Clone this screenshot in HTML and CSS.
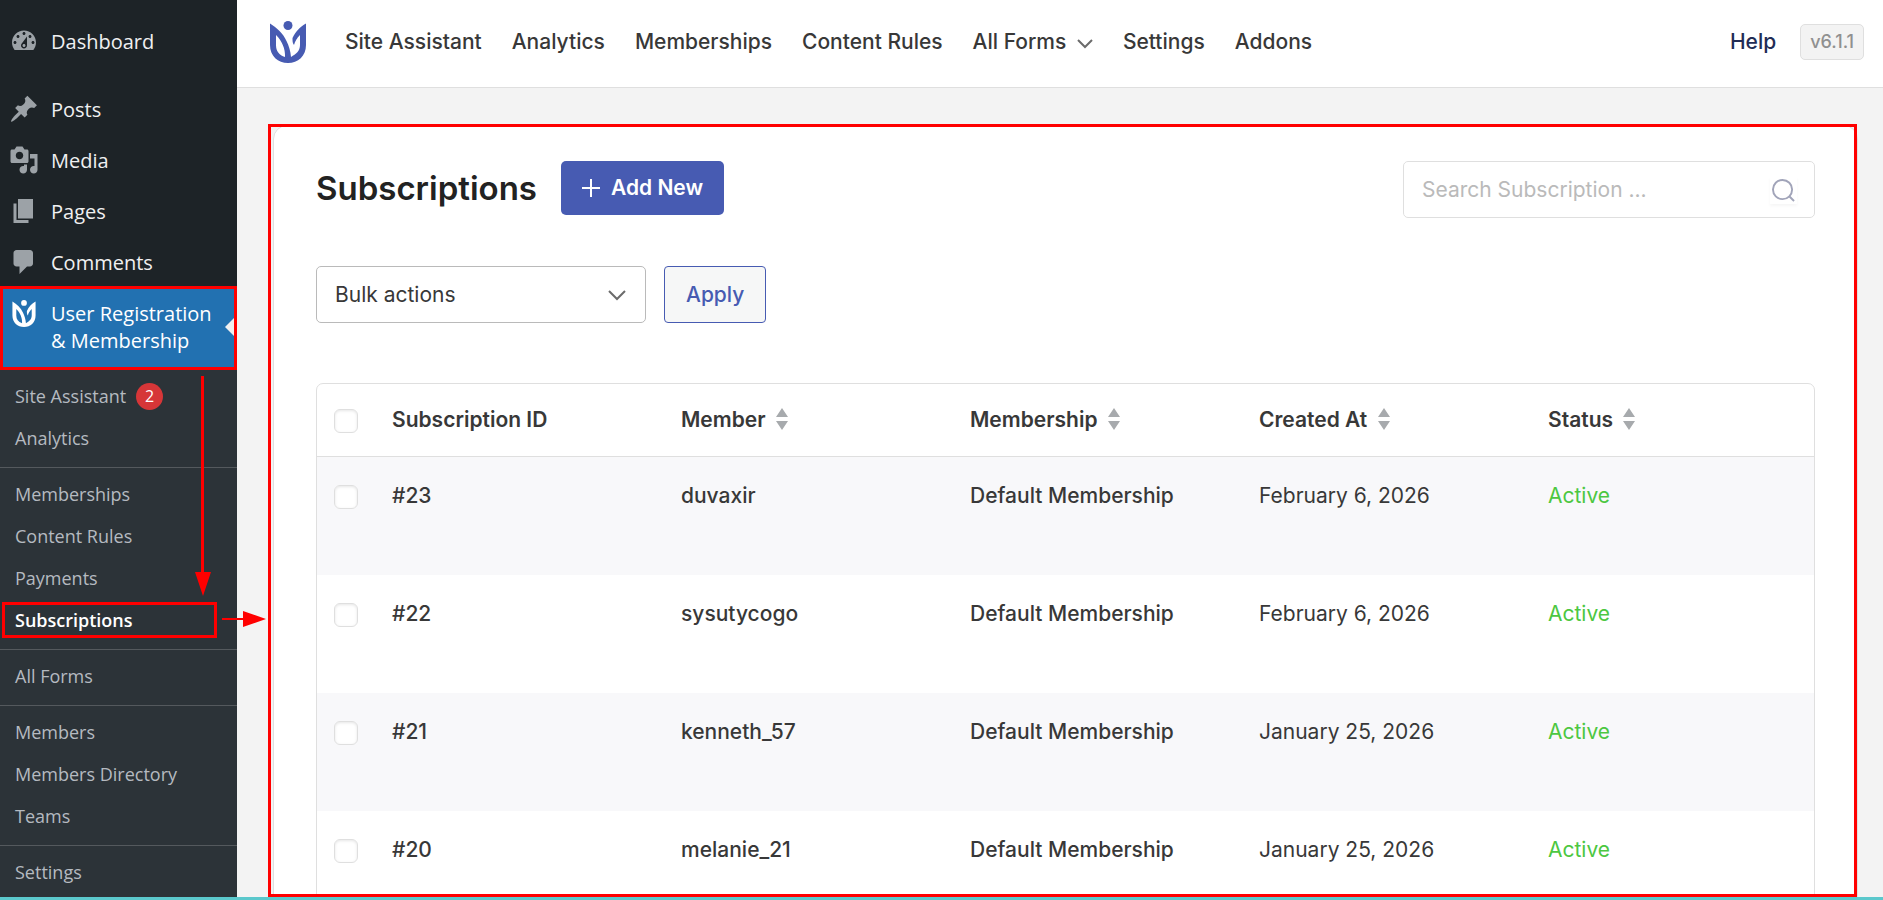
FILE: index.html
```
<!DOCTYPE html>
<html lang="en">
<head>
    <meta charset="UTF-8">
    <meta name="viewport" content="width=device-width, initial-scale=1.0">
    <title>Subscriptions - User Registration &amp; Membership</title>
    <link rel="stylesheet" href="styles.css">
</head>
<body>
    <svg width="0" height="0" class="sprite" aria-hidden="true">
        <symbol id="logo" viewBox="0 0 36 42">
            <circle cx="18" cy="4.5" r="4.5"/>
            <path fill-rule="evenodd" d="M0 2.5C7 7 13 12 16.500 20C19 25 20.500 30 21 36C26 33 30 30 30 24V14C27 17 25 20 24 24C22.500 22 22.500 20 22.500 17C26 10 30 6 36 2.500V24C36 35 28 42 18 42C8 42 0 35 0 24ZM6 14V24C6 30 9 34 15 36C15.500 28 12 20 6 14Z"/>
        </symbol>
        <symbol id="sort" viewBox="0 0 12 22">
            <path d="M6 0L12 9H0ZM6 22L0 13H12Z"/>
        </symbol>
    </svg>

    <div class="app">
        <!-- Admin sidebar -->
        <aside class="sidebar">
            <nav>
                <ul class="menu">
                    <li class="menu-gap"><a href="#">
                        <svg class="menu-icon" viewBox="0 0 20 20"><path fill-rule="evenodd" d="M3.760 16h12.480c1.100-1.370 1.760-3.110 1.760-5c0-4.420-3.580-8-8-8s-8 3.580-8 8c0 1.890.66 3.630 1.760 5zM10 4c.55 0 1 .45 1 1s-.45 1-1 1s-1-.45-1-1s.45-1 1-1zM6 6c.55 0 1 .45 1 1s-.45 1-1 1s-1-.45-1-1s.45-1 1-1zm8 0c.55 0 1 .45 1 1s-.45 1-1 1s-1-.45-1-1s.45-1 1-1zm-5.370 5.550L12 7v6c0 1.100-.9 2-2 2s-2-.9-2-2c0-.57.240-1.080.63-1.450zM4 10c.55 0 1 .45 1 1s-.45 1-1 1s-1-.45-1-1s.45-1 1-1zm12 0c.55 0 1 .45 1 1s-.45 1-1 1s-1-.45-1-1s.45-1 1-1zm-5 3c0-.55-.45-1-1-1s-1 .45-1 1s.45 1 1 1s1-.45 1-1z"/></svg>
                        Dashboard</a></li>
                    <li><a href="#">
                        <svg class="menu-icon" viewBox="0 0 20 20"><path d="M10.440 3.020l1.820-1.820l6.360 6.350l-1.830 1.820c-1.050-.68-2.480-.57-3.410.360l-.75.750c-.92.930-1.040 2.350-.350 3.410l-1.830 1.820l-2.410-2.410l-2.800 2.790c-.42.420-3.380 2.710-3.800 2.290s1.860-3.390 2.280-3.810l2.790-2.790L4.100 9.360l1.830-1.820c1.050.69 2.480.57 3.400-.360l.75-.750c.93-.92 1.050-2.350.360-3.410z"/></svg>
                        Posts</a></li>
                    <li><a href="#">
                        <svg class="menu-icon" viewBox="0 0 20 20"><path fill-rule="evenodd" d="M13 11V4c0-.55-.45-1-1-1h-1.670L9 1H5L3.670 3H2c-.55 0-1 .45-1 1v7c0 .55.450 1 1 1h10c.55 0 1-.45 1-1zM7 4.500c1.380 0 2.500 1.120 2.500 2.500S8.380 9.500 7 9.500S4.500 8.380 4.500 7S5.620 4.500 7 4.500zM14 6h5v10.500c0 1.380-1.120 2.500-2.500 2.500S14 17.880 14 16.500s1.120-2.500 2.500-2.500c.17 0 .34.020.5.050V9h-3V6zm-4 8.050V13h2v3.500c0 1.380-1.120 2.500-2.500 2.500S7 17.880 7 16.500S8.120 14 9.500 14c.17 0 .34.020.5.050z"/></svg>
                        Media</a></li>
                    <li><a href="#">
                        <svg class="menu-icon" viewBox="0 0 20 20"><path d="M6 15V2h10v13H6zm-1 1h8v2H3V5h2v11z"/></svg>
                        Pages</a></li>
                    <li><a href="#">
                        <svg class="menu-icon" viewBox="0 0 20 20"><path d="M5 2h9c1.100 0 2 .9 2 2v7c0 1.100-.9 2-2 2h-2l-5 5v-5H5c-1.100 0-2-.9-2-2V4c0-1.100.9-2 2-2z"/></svg>
                        Comments</a></li>
                    <li class="current"><a href="#">
                        <svg class="menu-icon brand-icon"><use href="#logo"/></svg>
                        User Registration &amp; Membership</a></li>
                </ul>
                <ul class="submenu">
                    <li><a href="#">Site Assistant <span class="count">2</span></a></li>
                    <li><a href="#">Analytics</a></li>
                    <li class="divided"><a href="#">Memberships</a></li>
                    <li><a href="#">Content Rules</a></li>
                    <li><a href="#">Payments</a></li>
                    <li class="selected"><a href="#">Subscriptions</a></li>
                    <li class="divided"><a href="#">All Forms</a></li>
                    <li class="divided"><a href="#">Members</a></li>
                    <li><a href="#">Members Directory</a></li>
                    <li><a href="#">Teams</a></li>
                    <li class="divided"><a href="#">Settings</a></li>
                </ul>
            </nav>
            <!-- Guide arrows -->
            <svg class="arrow-down" viewBox="0 0 16 220" aria-hidden="true"><path d="M6 0H9V196H16L8 220L0 196H6Z"/></svg>
            <svg class="arrow-right" viewBox="0 0 44 16" aria-hidden="true"><path d="M0 7H21V0L44 8L21 16V9H0Z"/></svg>
        </aside>

        <main class="main">
            <header class="topbar">
                <svg class="logo"><use href="#logo"/></svg>
                <nav class="topnav">
                    <a href="#">Site Assistant</a>
                    <a href="#">Analytics</a>
                    <a href="#">Memberships</a>
                    <a href="#">Content Rules</a>
                    <a href="#">All Forms
                        <svg class="nav-chevron" viewBox="0 0 16 10"><path d="M1 1L8 8L15 1"/></svg></a>
                    <a href="#">Settings</a>
                    <a href="#">Addons</a>
                </nav>
                <a href="#" class="help">Help</a>
                <span class="version">v6.1.1</span>
            </header>

            <div class="content">
                <section class="card">
                    <div class="card-head">
                        <h1>Subscriptions</h1>
                        <button type="button" class="add-button">
                            <svg viewBox="0 0 18 18"><path d="M9 0V18M0 9H18"/></svg>
                            Add New
                        </button>
                        <form class="search">
                            <input type="text" aria-label="Search Subscription" placeholder="Search Subscription ...">
                            <button type="submit" aria-label="Search">
                                <svg viewBox="0 0 24 24"><circle cx="11" cy="11" r="10"/><path d="M18 18L23 23"/></svg>
                            </button>
                        </form>
                    </div>

                    <div class="bulk">
                        <div class="select-wrap">
                            <select aria-label="Bulk actions">
                                <option>Bulk actions</option>
                                <option>Delete</option>
                            </select>
                            <svg viewBox="0 0 18 11"><path d="M1 1L9 9L17 1"/></svg>
                        </div>
                        <button type="button" class="apply-button">Apply</button>
                    </div>

                    <div class="table-wrap">
                        <table>
                            <thead>
                                <tr>
                                    <th class="check"><input type="checkbox" aria-label="Select all"></th>
                                    <th>Subscription ID</th>
                                    <th>Member <svg class="sort"><use href="#sort"/></svg></th>
                                    <th>Membership <svg class="sort"><use href="#sort"/></svg></th>
                                    <th>Created At <svg class="sort"><use href="#sort"/></svg></th>
                                    <th>Status <svg class="sort"><use href="#sort"/></svg></th>
                                </tr>
                            </thead>
                            <tbody>
                                <tr>
                                    <td class="check"><input type="checkbox" aria-label="Select #23"></td>
                                    <td class="strong">#23</td>
                                    <td class="strong">duvaxir</td>
                                    <td class="strong">Default Membership</td>
                                    <td>February 6, 2026</td>
                                    <td class="active">Active</td>
                                </tr>
                                <tr>
                                    <td class="check"><input type="checkbox" aria-label="Select #22"></td>
                                    <td class="strong">#22</td>
                                    <td class="strong">sysutycogo</td>
                                    <td class="strong">Default Membership</td>
                                    <td>February 6, 2026</td>
                                    <td class="active">Active</td>
                                </tr>
                                <tr>
                                    <td class="check"><input type="checkbox" aria-label="Select #21"></td>
                                    <td class="strong">#21</td>
                                    <td class="strong">kenneth_57</td>
                                    <td class="strong">Default Membership</td>
                                    <td>January 25, 2026</td>
                                    <td class="active">Active</td>
                                </tr>
                                <tr>
                                    <td class="check"><input type="checkbox" aria-label="Select #20"></td>
                                    <td class="strong">#20</td>
                                    <td class="strong">melanie_21</td>
                                    <td class="strong">Default Membership</td>
                                    <td>January 25, 2026</td>
                                    <td class="active">Active</td>
                                </tr>
                            </tbody>
                        </table>
                    </div>
                </section>
                <div class="highlight"></div>
            </div>
        </main>
    </div>
</body>
</html>
```
FILE: styles.css
```
* {
    box-sizing: border-box;
}

body {
    margin: 0;
    height: 100vh;
    overflow: hidden;
    border-bottom: 3px solid #5bc8cc;
    background: #f3f3f3;
    color: #383838;
    font-family: Inter, "Liberation Sans", sans-serif;
    font-size: 21px;
    line-height: 28px;
}

a {
    color: inherit;
    text-decoration: none;
}

ul {
    list-style: none;
    margin: 0;
    padding: 0;
}

button,
input,
select {
    font: inherit;
}

.sprite {
    position: absolute;
}

.app {
    display: flex;
    height: 100%;
}

/* Sidebar */
.sidebar {
    position: relative;
    flex: 0 0 237px;
    padding-top: 16px;
    background: #1d2327;
    color: #f0f0f1;
    font-family: "Open Sans", "Noto Sans", sans-serif;
    font-size: 20px;
    line-height: 27px;
    z-index: 1;
}

.menu a {
    display: flex;
    padding: 12px 20px 12px 9px;
}

.menu-gap {
    margin-bottom: 17px;
}

.menu-icon {
    flex: none;
    width: 30px;
    height: 30px;
    margin: -2px 12px 0 0;
    fill: #9ca2a7;
}

.menu li:not(.current) a {
    height: 51px;
}

.current {
    position: relative;
    background: #2271b1;
    color: #fff;
}

.current a {
    padding-bottom: 13px;
}

.current .brand-icon {
    height: 27px;
    margin-top: 0;
    fill: #fff;
}

.current::before {
    content: "";
    position: absolute;
    right: 0;
    top: 50%;
    margin-top: -13px;
    border: 12px solid transparent;
    border-right-color: #f0f0f1;
    border-left: 0;
}

.current::after {
    content: "";
    position: absolute;
    inset: -2px 0 -3px;
    border: 3px solid #f00;
}

.submenu {
    height: 100%;
    padding-top: 8px;
    background: #2c3338;
    color: #b5bac0;
    font-size: 18px;
    line-height: 42px;
}

.sidebar nav {
    height: 100%;
    overflow: hidden;
}

.submenu a {
    display: flex;
    align-items: center;
    gap: 10px;
    height: 42px;
    padding: 0 15px;
}

.divided {
    margin-top: 8px;
    padding-top: 5px;
    border-top: 1px solid #54595d;
}

.count {
    width: 27px;
    height: 27px;
    border-radius: 50%;
    background: #d63638;
    color: #fff;
    font-size: 16px;
    line-height: 27px;
    text-align: center;
}

.selected {
    position: relative;
    color: #fff;
    font-weight: 600;
}

.selected::after {
    content: "";
    position: absolute;
    inset: 3px 20px 3px 2px;
    border: 3px solid #f00;
}

.arrow-down {
    position: absolute;
    left: 195px;
    top: 376px;
    width: 16px;
    height: 220px;
    fill: #f00;
}

.arrow-right {
    position: absolute;
    left: 222px;
    top: 611px;
    width: 44px;
    height: 16px;
    fill: #f00;
}

/* Top bar */
.main {
    flex: 1;
    min-width: 0;
    display: flex;
    flex-direction: column;
}

.topbar {
    display: flex;
    align-items: center;
    flex: none;
    height: 88px;
    padding: 0 19px 4px 33px;
    border-bottom: 1px solid #dfdfdf;
    background: #fff;
}

.logo {
    width: 36px;
    height: 42px;
    margin-right: 39px;
    fill: #475bb2;
}

.topnav {
    display: flex;
    gap: 30px;
    font-weight: 500;
}

.nav-chevron {
    width: 16px;
    height: 10px;
    margin-left: 5px;
    fill: none;
    stroke: #6b6b6b;
    stroke-width: 2;
}

.help {
    margin-left: auto;
    color: #222c55;
    font-weight: 500;
}

.version {
    margin-left: 24px;
    padding: 3px 9px;
    border: 1px solid #dfdfdf;
    border-radius: 5px;
    background: #f3f3f3;
    color: #909090;
    font-size: 18px;
    font-weight: 500;
}

/* Card */
.content {
    position: relative;
    flex: 1;
    min-height: 0;
    padding: 37px 25px 0 36px;
}

.card {
    height: 100%;
    overflow: hidden;
    padding: 35px 42px 0;
    border: 1px solid #dfdfdf;
    border-radius: 14px 14px 0 0;
    background: #fff;
}

.highlight {
    position: absolute;
    inset: 36px 26px 0 31px;
    border: 3px solid #f00;
    pointer-events: none;
}

.card-head {
    display: flex;
    align-items: flex-start;
}

h1 {
    margin: 0;
    color: #222;
    font-size: 33px;
    font-weight: 600;
    line-height: 54px;
}

.add-button {
    display: flex;
    align-items: center;
    gap: 11px;
    height: 54px;
    margin-left: 24px;
    padding: 0 21px;
    border: 0;
    border-radius: 5px;
    background: #475bb2;
    color: #fff;
    font-weight: 600;
}

.add-button svg {
    width: 18px;
    height: 18px;
    stroke: #fff;
    stroke-width: 2;
}

.search {
    position: relative;
    width: 412px;
    margin-left: auto;
}

.search input {
    width: 100%;
    height: 57px;
    padding: 0 60px 0 18px;
    border: 1px solid #dfdfdf;
    border-radius: 5px;
    background: #fff;
}

.search input::placeholder {
    color: #bababa;
}

.search button {
    position: absolute;
    right: 18px;
    top: 16px;
    width: 27px;
    height: 27px;
    padding: 2px;
    border: 0;
    background: #fff;
    box-shadow: 0 2px 3px rgba(0, 0, 0, 0.04);
}

.search svg {
    display: block;
    width: 23px;
    height: 23px;
    fill: none;
    stroke: #a1a4b9;
    stroke-width: 2;
}

.bulk {
    display: flex;
    gap: 18px;
    margin: 48px 0 60px;
}

.select-wrap {
    position: relative;
    width: 330px;
}

.select-wrap select {
    display: block;
    width: 100%;
    height: 57px;
    padding: 0 18px;
    appearance: none;
    border: 1px solid #bababa;
    border-radius: 5px;
    background: #fff;
    color: #383838;
}

.select-wrap svg {
    position: absolute;
    right: 20px;
    top: 24px;
    width: 18px;
    height: 11px;
    fill: none;
    stroke: #6b6b6b;
    stroke-width: 2;
    pointer-events: none;
}

.apply-button {
    padding: 0 21px;
    border: 1px solid #475bb2;
    border-radius: 4px;
    background: #f6f7f7;
    color: #475bb2;
    font-weight: 500;
}

/* Table */
.table-wrap {
    border: 1px solid #dfdfdf;
    border-radius: 7px;
    overflow: hidden;
}

table {
    width: 100%;
    table-layout: fixed;
    border-collapse: separate;
    border-spacing: 0;
}

th,
td {
    padding: 25px 23px 20px;
    text-align: left;
    vertical-align: top;
}

th {
    height: 73px;
    padding-top: 22px;
    border-bottom: 1px solid #dfdfdf;
    font-weight: 600;
}

td {
    height: 118px;
}

tbody tr:nth-child(odd) {
    background: #f8f8fa;
}

.check {
    width: 52px;
    padding-left: 17px;
    padding-right: 0;
}

.check input {
    display: block;
    appearance: none;
    width: 24px;
    height: 24px;
    margin: 3px 0 0;
    border: 1px solid #dfdfdf;
    border-radius: 6px;
    background: #fff;
    box-shadow: inset 0 1px 3px rgba(0, 0, 0, 0.1);
}

.strong {
    font-weight: 500;
}

.active {
    color: #4cc741;
}

.sort {
    width: 12px;
    height: 22px;
    margin-left: 5px;
    vertical-align: -3px;
    fill: #a7aaad;
}
```
